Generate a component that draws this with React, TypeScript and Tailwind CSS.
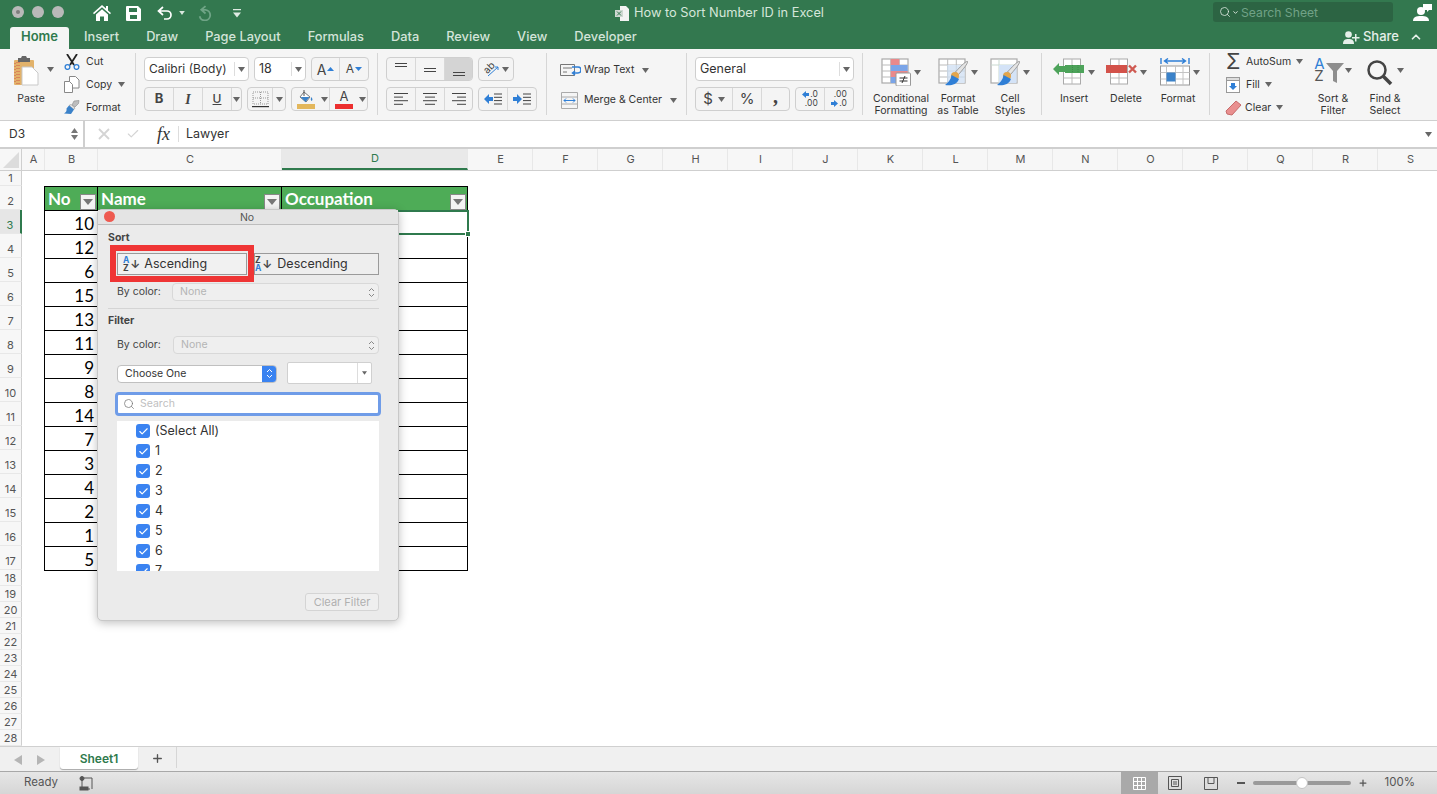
import { Check, ChevronDown, ChevronUp, Search, Plus } from "lucide-react"

const FONT = "font-['Inter','Liberation_Sans',sans-serif]"
const CELL_FONT = "font-['Lato','Noto_Sans',sans-serif]"

function Caret({ className = "" }: { className?: string }) {
  return (
    <svg width="7" height="5" viewBox="0 0 7 5" className={`shrink-0 ${className}`}>
      <path d="M0 0h7L3.5 5z" fill="#666" />
    </svg>
  )
}

function Seg({ className = "", children }: { className?: string; children: React.ReactNode }) {
  return (
    <div className={`flex h-[24px] overflow-hidden rounded-[4px] border border-[#cfcfcf] bg-[#f4f4f4] ${className}`}>
      {children}
    </div>
  )
}

function SegItem({ className = "", children }: { className?: string; children: React.ReactNode }) {
  return (
    <div className={`flex h-full items-center justify-center border-r border-[#d8d8d8] last:border-r-0 ${className}`}>
      {children}
    </div>
  )
}

function Combo({ label, className = "" }: { label: string; className?: string }) {
  return (
    <div className={`flex h-[24px] items-center rounded-[4px] border border-[#cfcfcf] bg-white text-[#333] ${className}`}>
      <span className="flex-1 pl-[4px] whitespace-nowrap">{label}</span>
      <span className="flex h-[14px] w-[14px] items-center justify-center border-l border-[#ddd]">
        <Caret />
      </span>
    </div>
  )
}

function Lines({ rows }: { rows: [number, number][] }) {
  return (
    <svg width="16" height="14" viewBox="0 0 16 14">
      {rows.map(([x, w], i) => (
        <rect key={i} x={x} y={1 + i * 3.6} width={w} height="1" fill="#444" />
      ))}
    </svg>
  )
}

function VAlign({ y }: { y: number }) {
  return (
    <svg width="14" height="16" viewBox="0 0 14 16">
      <rect x="1" y={y} width="12" height="1" fill="#444" />
      <rect x="1" y={y + 3} width="12" height="1" fill="#444" />
    </svg>
  )
}

function Indent({ flip }: { flip?: boolean }) {
  return (
    <svg width="19" height="12" viewBox="0 0 19 12">
      <path d={flip ? "M0 4h4V1l5 5-5 5V8H0z" : "M9 4H5V1L0 6l5 5V8h4z"} fill="#2f7fd6" />
      <path d="M10 1h8M10 4.3h8M10 7.6h8M10 11h8" stroke="#444" strokeWidth="1" />
    </svg>
  )
}

function SheetGrid({ children }: { children?: React.ReactNode }) {
  return (
    <svg width="30" height="28" viewBox="0 0 30 28">
      <rect x="1" y="1" width="26" height="24" fill="#fff" stroke="#aaa" strokeWidth="1.200" />
      <path d="M9.700 1v24M18.300 1v24M1 7h26M1 13h26M1 19h26" stroke="#bbb" strokeWidth="1" />
      {children}
    </svg>
  )
}

function Brush() {
  return (
    <>
      <path d="M29.500 3.500c.5 1-1 4-9 13l-3-2.500c7-8 11-11 12-10.500z" fill="#e4e4e4" stroke="#8c8c8c" strokeWidth=".8" />
      <circle cx="17" cy="18" r="4" fill="#e2a54c" />
      <path d="M13.500 17c-.5 5-4 8-6.500 10 5 1 12 0 14-6z" fill="#2f7fd6" />
    </>
  )
}

function BigTool({ icon, label, width, pad = "" }: { icon: React.ReactNode; label: React.ReactNode; width: string; pad?: string }) {
  return (
    <div className={`flex shrink-0 flex-col items-center ${width}`}>
      <div className={`flex h-[34px] shrink-0 items-start gap-[3px] ${pad}`}>
        {icon}
        <Caret className="mt-[12px]" />
      </div>
      <div className="mt-[1px] text-center text-[10.5px] leading-[12px] whitespace-nowrap text-[#333]">{label}</div>
    </div>
  )
}

function TitleBar() {
  return (
    <div className="flex h-[24px] items-center text-white">
      <div className="flex w-[90px] items-center gap-[8px] pl-[12px]">
        <span className="flex h-[12px] w-[12px] items-center justify-center rounded-full bg-[#b9b9b9]">
          <span className="h-[4px] w-[4px] rounded-full bg-[#7d7d7d]" />
        </span>
        <span className="h-[12px] w-[12px] rounded-full bg-[#b9b9b9]" />
        <span className="h-[12px] w-[12px] rounded-full bg-[#b9b9b9]" />
      </div>
      <div className="flex items-center pt-[2px]">
        <svg width="18" height="16" viewBox="0 0 18 16" className="ml-[3px]">
          <path d="M9 0 0 8l1 1.2L9 2.3l8 6.9L18 8l-3-2.6V1h-2v2.6zM3 9.6V16h4v-4.5h4V16h4V9.6L9 4.2z" fill="#fff" />
        </svg>
        <svg width="15" height="15" viewBox="0 0 15 15" className="ml-[15px]">
          <path d="M1 0h11l3 3v11a1 1 0 0 1-1 1H1a1 1 0 0 1-1-1V1a1 1 0 0 1 1-1zm2 2v4h8V2zm1 7v4h7V9z" fill="#fff" fillRule="evenodd" />
        </svg>
        <svg width="16" height="14" viewBox="0 0 16 14" className="ml-[16px]" fill="none" stroke="#fff" strokeWidth="1.7">
          <path d="M6 1 1.5 5 6 9M2 5h8a4 4 0 0 1 4 4 4 4 0 0 1-4 4H7" />
        </svg>
        <svg width="6" height="4" viewBox="0 0 7 5" className="ml-[6px]">
          <path d="M0 0h7L3.5 5z" fill="#dbe8df" />
        </svg>
        <svg width="16" height="16" viewBox="0 0 15 15" className="ml-[12px]" fill="none" stroke="#6fa486" strokeWidth="1.7">
          <path d="M8 1 4 4.5 8 8M4.5 4.5H8a5 5 0 1 1-5.5 6" />
        </svg>
        <svg width="8" height="9" viewBox="0 0 8 9" className="ml-[20px]">
          <path d="M0 0h8v1.3H0zM0 3.4h8L4 8.4z" fill="#dfeae3" />
        </svg>
      </div>
      <div className="ml-[374px] flex items-center gap-[5px] pt-[2px]">
        <svg width="14" height="15" viewBox="0 0 14 15">
          <path d="M5 0h6l3 3v12H5z" fill="#f3f3f3" />
          <rect x="0" y="4" width="8" height="7" fill="#cfd8d2" />
          <path d="m2 5.5 4 4m0-4-4 4" stroke="#33784f" strokeWidth="1" />
        </svg>
        <span className="text-[12.8px] text-[#d5e6da]">How to Sort Number ID in Excel</span>
      </div>
      <div className="ml-auto flex h-[20px] w-[180px] items-center rounded-[3px] bg-[#2c6443] pl-[6px]">
        <Search size={12} strokeWidth={1.5} className="text-[#e8f0ea]" />
        <ChevronDown size={7} strokeWidth={3} className="ml-[1px] text-[#e8f0ea]" />
        <span className="ml-[2px] pt-[2px] text-[12.2px] text-[#71a287]">Search Sheet</span>
      </div>
      <svg width="20" height="19" viewBox="0 0 20 19" className="mr-[4px] ml-[20px]">
        <circle cx="8" cy="8" r="4" fill="#fff" />
        <path d="M0 18c0-4 3-5 8-5s8 1 8 5z" fill="#fff" />
        <path d="M10 1h9v6h-3l-2 2V7h-4z" fill="#fff" />
      </svg>
    </div>
  )
}

const TABS = ["Insert", "Draw", "Page Layout", "Formulas", "Data", "Review", "View", "Developer"]
const TAB_GAPS = ["ml-[15px]", "ml-[27px]", "ml-[27px]", "ml-[27px]", "ml-[27px]", "ml-[27px]", "ml-[27px]", "ml-[27px]"]

function TabBar() {
  return (
    <div className="flex h-[25px] items-end">
      <div className="ml-[10px] flex h-[22px] w-[59px] items-center justify-center rounded-t-[3px] bg-[#f5f5f5] pb-[2px] text-[13px] font-semibold text-[#2f7a4d]">
        Home
      </div>
      <div className="flex h-[22px] items-center pb-[2px]">
        {TABS.map((t, i) => (
          <span key={t} className={`${TAB_GAPS[i]} text-[12.8px] font-medium whitespace-nowrap text-[#d3e4d9]`}>
            {t}
          </span>
        ))}
      </div>
      <div className="ml-auto flex h-[22px] items-center pr-[14px] pb-[2px] text-white">
        <svg width="17" height="13" viewBox="0 0 17 13">
          <circle cx="5.5" cy="3.5" r="3.3" fill="#e5efe9" />
          <path d="M0 13c0-4 2-5 5.5-5s5.500 1 5.500 5z" fill="#e5efe9" />
          <path d="M12 3v3H9v1.500h3v3h1.500v-3h3V6h-3V3z" fill="#e5efe9" />
        </svg>
        <span className="ml-[3px] text-[13px] font-medium text-[#e5efe9]">Share</span>
        <ChevronUp size={14} strokeWidth={3} className="ml-[10px] text-[#e5efe9]" />
      </div>
    </div>
  )
}

function ClipboardGroup() {
  return (
    <div className="flex h-[62px] w-[136px] shrink-0 border-r border-[#d6d6d6]">
      <div className="ml-[13px] flex w-[36px] shrink-0 flex-col items-center">
        <svg width="26" height="31" viewBox="0 0 26 31" className="mt-[3px] mr-[10px] shrink-0">
          <rect x="1" y="4" width="20" height="25" rx="1" fill="#e2b26a" />
          <path d="M2 7v21M4 6v23M6 6v23" stroke="#d05b4a" strokeWidth="1" strokeDasharray="1 2" />
          <path d="M5 4V2h3l1-2h4l1 2h3v4H5z" fill="#666" />
          <path d="M9 11h10l6 6v12H9z" fill="#fff" stroke="#c9c9c9" />
        </svg>
        <span className="mt-[6px] text-[10.5px] leading-[12px] text-[#333]">Paste</span>
      </div>
      <Caret className="mt-[14px] -ml-[2px]" />
      <div className="-mt-[3px] ml-[10px] flex flex-col">
        <div className="flex h-[23px] shrink-0 items-center">
          <svg width="16" height="16" viewBox="0 0 16 16" fill="none" className="mr-[6px]">
            <path d="m3 0 7 11M13 0 6 11" stroke="#222" strokeWidth="1.8" />
            <circle cx="3.500" cy="13" r="2.400" stroke="#2f7fd6" strokeWidth="1.300" />
            <circle cx="12.500" cy="13" r="2.400" stroke="#2f7fd6" strokeWidth="1.300" />
          </svg>
          <span className="text-[10.5px] text-[#333]">Cut</span>
        </div>
        <div className="flex h-[23px] shrink-0 items-center">
          <svg width="16" height="17" viewBox="0 0 16 17" fill="#fff" stroke="#888" className="mr-[6px]">
            <path d="M5.500.5h6l3.500 3.500v8h-9.500z" />
            <path d="M.5 5.500h5l3 3v8h-8z" />
          </svg>
          <span className="text-[10.500px] text-[#333]">Copy</span>
          <Caret className="ml-[6px]" />
        </div>
        <div className="flex h-[23px] shrink-0 items-center">
          <svg width="16" height="15" viewBox="0 0 16 15" className="mr-[6px]">
            <path d="m10 1 5-.5-.5 3L11 7 8 5z" fill="#bdbdbd" stroke="#888" strokeWidth=".6" />
            <path d="m7 4.500 4 3.500-1 1.500-5-4z" fill="#e8e8e8" stroke="#888" strokeWidth=".6" />
            <path d="m5 5.500 5 4-3 4.500-7-.5c2-1 3-3 2.500-5z" fill="#3b82c9" />
          </svg>
          <span className="text-[10.500px] text-[#333]">Format</span>
        </div>
      </div>
    </div>
  )
}

function FontGroup() {
  return (
    <div className="flex h-[62px] w-[242px] shrink-0 flex-col gap-[6px] border-r border-[#d6d6d6] pt-[4px] pl-[8px]">
      <div className="flex gap-[5px]">
        <Combo label="Calibri (Body)" className="w-[105px] text-[12px]" />
        <Combo label="18" className="w-[52px] text-[12.5px]" />
        <Seg className="w-[58px]">
          <SegItem className="w-[29px] gap-[1px]">
            <span className="text-[14px] text-[#444]">A</span>
            <svg width="7" height="4" viewBox="0 0 7 4"><path d="M0 4h7L3.500 0z" fill="#2f7fd6" /></svg>
          </SegItem>
          <SegItem className="w-[29px] gap-[1px]">
            <span className="text-[12px] text-[#444]">A</span>
            <svg width="7" height="4" viewBox="0 0 7 4"><path d="M0 0h7L3.500 4z" fill="#2f7fd6" /></svg>
          </SegItem>
        </Seg>
      </div>
      <div className="flex gap-[5px]">
        <Seg className="w-[98px]">
          <SegItem className="w-[29px] text-[13px] font-bold text-[#444]">B</SegItem>
          <SegItem className="w-[29px] font-['Liberation_Serif',serif] text-[14px] font-bold text-[#444] italic">I</SegItem>
          <SegItem className="w-[29px] text-[12px] font-medium text-[#444] underline">U</SegItem>
          <SegItem className="flex-1"><Caret /></SegItem>
        </Seg>
        <Seg className="w-[39px]">
          <SegItem className="w-[25px]">
            <svg width="17" height="17" viewBox="0 0 17 17">
              <path d="M1 1h15v12H1zM8.500 1v12M1 7h15" fill="none" stroke="#999" strokeDasharray="1 1" />
              <rect x="0" y="15" width="17" height="1.200" fill="#333" />
            </svg>
          </SegItem>
          <SegItem className="flex-1"><Caret /></SegItem>
        </Seg>
        <Seg className="w-[77px]">
          <div className="flex w-[28px] flex-col items-center justify-center">
            <svg width="14" height="13" viewBox="0 0 14 13">
              <path d="m5 2 6 5-4 5-6-5z" fill="#fff" stroke="#777" strokeWidth="1" />
              <path d="M1.500 7h9l-4 5z" fill="#3b82c9" />
              <path d="M5 0v6" stroke="#555" />
              <path d="M12.500 7c1 2 1.500 3 0 4-1-1-1-2 0-4z" fill="#3b82c9" />
            </svg>
            <span className="mt-[1px] h-[5px] w-[18px] bg-[#e3b75c]" />
          </div>
          <SegItem className="w-[10px]"><Caret /></SegItem>
          <div className="flex w-[28px] flex-col items-center justify-center">
            <span className="text-[13px] leading-[13px] text-[#444]">A</span>
            <span className="mt-[1px] h-[5px] w-[18px] bg-[#ec2f2f]" />
          </div>
          <div className="flex flex-1 items-center justify-center"><Caret /></div>
        </Seg>
      </div>
    </div>
  )
}

function AlignGroup() {
  return (
    <div className="flex h-[62px] w-[169px] shrink-0 flex-col gap-[6px] border-r border-[#d6d6d6] pt-[4px] pl-[8px]">
      <div className="flex gap-[5px]">
        <Seg className="w-[87px]">
          <SegItem className="w-[29px]"><VAlign y={2} /></SegItem>
          <SegItem className="w-[29px]"><VAlign y={7} /></SegItem>
          <SegItem className="flex-1 bg-[#d4d4d4]"><VAlign y={11} /></SegItem>
        </Seg>
        <Seg className="w-[36px]">
          <div className="flex flex-1 items-center justify-center gap-[3px]">
            <span className="relative flex h-[16px] w-[16px] items-center justify-center">
              <span className="-translate-x-[2px] -translate-y-[2px] -rotate-45 text-[10px] text-[#444]">ab</span>
              <svg width="16" height="16" viewBox="0 0 16 16" className="absolute top-0 left-0">
                <path d="m5 15 10-9M15 6h-3M15 6v3" stroke="#2f7fd6" fill="none" />
              </svg>
            </span>
            <Caret />
          </div>
        </Seg>
      </div>
      <div className="flex gap-[5px]">
        <Seg className="w-[87px]">
          <SegItem className="w-[29px]"><Lines rows={[[1, 14], [1, 9], [1, 14], [1, 9]]} /></SegItem>
          <SegItem className="w-[29px]"><Lines rows={[[1, 14], [3, 10], [1, 14], [3, 10]]} /></SegItem>
          <SegItem className="flex-1"><Lines rows={[[1, 14], [6, 9], [1, 14], [6, 9]]} /></SegItem>
        </Seg>
        <Seg className="w-[59px]">
          <SegItem className="w-[29px]"><Indent /></SegItem>
          <SegItem className="flex-1"><Indent flip /></SegItem>
        </Seg>
      </div>
    </div>
  )
}

function WrapGroup() {
  return (
    <div className="flex h-[62px] w-[140px] shrink-0 flex-col border-r border-[#d6d6d6] pt-[5px] pl-[13px] text-[10.500px] text-[#333]">
      <div className="flex h-[24px] items-center">
        <svg width="21" height="14" viewBox="0 0 21 14" fill="none" className="mr-[3px]">
          <path d="M.5 1.500h14v11H.5zM3 5h9M3 9h4" stroke="#777" />
          <path d="M12 4h6a2.500 2.500 0 0 1 0 6h-5M15 8l-2.500 2 2.500 2" stroke="#2f7fd6" strokeWidth="1.500" />
        </svg>
        <span className="whitespace-nowrap">Wrap Text</span>
        <Caret className="ml-[8px]" />
      </div>
      <div className="mt-[6px] flex h-[24px] items-center">
        <svg width="18" height="17" viewBox="0 0 18 17" fill="none" className="mr-[5px] ml-[1px]">
          <path d="M.5.500h16v16H.5zM.5 5h16M.5 12h16" stroke="#aaa" />
          <path d="M3 8.500h11M5 6.500l-2 2 2 2M12 6.500l2 2-2 2" stroke="#2f7fd6" />
        </svg>
        <span className="whitespace-nowrap">Merge &amp; Center</span>
        <Caret className="ml-[8px]" />
      </div>
    </div>
  )
}

function NumberGroup() {
  return (
    <div className="flex h-[62px] w-[176px] shrink-0 flex-col gap-[6px] border-r border-[#d6d6d6] pt-[4px] pl-[8px]">
      <Combo label="General" className="w-[159px] text-[12.5px]" />
      <div className="flex gap-[5px]">
        <Seg className="w-[95px]">
          <SegItem className="w-[37px] gap-[5px]">
            <span className="text-[15px] text-[#444]">$</span>
            <Caret />
          </SegItem>
          <SegItem className="w-[29px] text-[15px] text-[#444]">%</SegItem>
          <SegItem className="flex-1 pb-[6px] font-['Liberation_Serif',serif] text-[20px] leading-[16px] font-bold text-[#444]">,</SegItem>
        </Seg>
        <Seg className="w-[59px]">
          <SegItem className="w-[29px]">
            <span className="flex flex-col items-end text-[8.500px] leading-[9px] text-[#444]">
              <span className="flex items-center gap-[1px]">
                <svg width="7" height="7" viewBox="0 0 7 7"><path d="M0 3.500 4 0v2h3v3H4v2z" fill="#2f7fd6" /></svg>
                .0
              </span>
              <span>.00</span>
            </span>
          </SegItem>
          <SegItem className="flex-1">
            <span className="flex flex-col items-end text-[8.500px] leading-[9px] text-[#444]">
              <span>.00</span>
              <span className="flex items-center gap-[1px]">
                <svg width="7" height="7" viewBox="0 0 7 7"><path d="M7 3.500 3 0v2H0v3h3v2z" fill="#2f7fd6" /></svg>
                .0
              </span>
            </span>
          </SegItem>
        </Seg>
      </div>
    </div>
  )
}

function StylesGroup() {
  return (
    <div className="flex h-[62px] w-[179px] shrink-0 border-r border-[#d6d6d6] pt-[5px] pl-[8px]">
      <BigTool
        width="w-[60px]"
        label={<>Conditional<br />Formatting</>}
        icon={
          <SheetGrid>
            <rect x="9.700" y="1" width="8.600" height="6" fill="#e9898b" />
            <rect x="9.700" y="7" width="17" height="6" fill="#7ba5e8" />
            <rect x="9.700" y="13" width="17" height="6" fill="#e9898b" />
            <rect x="9.700" y="19" width="8.600" height="6" fill="#7ba5e8" />
            <rect x="15" y="15" width="14.500" height="13" rx="1" fill="#fff" stroke="#999" />
            <path d="M18.500 20h8M18.500 23h8M24 18l-3 7" stroke="#333" />
          </SheetGrid>
        }
      />
      <BigTool
        width="w-[54px]"
        label={<>Format<br />as Table</>}
        icon={
          <SheetGrid>
            <rect x="9.700" y="7" width="17" height="18" fill="#dbe7f6" />
            <path d="M9.700 7v18M18.300 7v18M9.700 13h17M9.700 19h17" stroke="#c8d6e4" />
            <Brush />
          </SheetGrid>
        }
      />
      <BigTool
        width="w-[50px]"
        label={<>Cell<br />Styles</>}
        icon={
          <svg width="30" height="28" viewBox="0 0 30 28">
            <rect x="1" y="1" width="26" height="24" fill="#fff" stroke="#aaa" strokeWidth="1.200" />
            <path d="M1 7h26M9 1v24" stroke="#c9d8d0" />
            <rect x="9" y="7" width="17.500" height="18" fill="#d4e3f7" />
            <Brush />
          </svg>
        }
      />
    </div>
  )
}

function CellsGroup() {
  return (
    <div className="flex h-[62px] w-[168px] shrink-0 border-r border-[#d6d6d6] pt-[5px] pl-[6px]">
      <BigTool
        width="w-[52px]"
        label="Insert"
        icon={
          <svg width="32" height="28" viewBox="0 0 32 28">
            <rect x="10.500" y="1" width="17" height="25" fill="#fff" stroke="#aaa" />
            <path d="M19 1v25M10.500 20h17" stroke="#bbb" />
            <rect x="12" y="7" width="19" height="8" fill="#4da35a" />
            <path d="M19.500 7v8M25 7v8" stroke="#3f8c4a" strokeDasharray="1 1" />
            <path d="M0 11 6 5v3h6v6H6v3z" fill="#4da35a" />
          </svg>
        }
      />
      <BigTool
        width="w-[52px]"
        label="Delete"
        icon={
          <svg width="31" height="28" viewBox="0 0 31 28">
            <rect x="4.500" y="1" width="17" height="25" fill="#fff" stroke="#aaa" />
            <path d="M13 1v25M4.500 20h17" stroke="#bbb" />
            <rect x="0" y="7" width="21" height="8" fill="#d3524a" />
            <path d="m23 7.500 7 7m0-7-7 7" stroke="#cf5a52" strokeWidth="2.400" />
          </svg>
        }
      />
      <BigTool
        width="w-[52px]"
        pad="pl-[3px]"
        label="Format"
        icon={
          <svg width="30" height="28" viewBox="0 0 30 28">
            <path d="M1 0v6M29 0v6M5 3h20M8 .5 4.500 3 8 5.500M22 .5 25.500 3 22 5.500" stroke="#2f7fd6" fill="none" strokeWidth="1.400" />
            <rect x=".5" y="8" width="29" height="19" fill="#fff" stroke="#999" />
            <path d="M6.500 8v19M15.500 8v19M23 8v19M.5 14.500h29M.5 21h29" stroke="#c4c4c4" />
            <rect x="6.500" y="14.500" width="9" height="9" fill="#3b82c9" />
          </svg>
        }
      />
    </div>
  )
}

function EditGroup() {
  return (
    <div className="flex h-[62px] flex-1 pl-[16px] text-[10.500px] text-[#333]">
      <div className="-mt-[3px] flex w-[81px] shrink-0 flex-col">
        <div className="flex h-[23px] shrink-0 items-center">
          <span className="w-[20px] text-[21px] leading-[19px] text-[#444]">Σ</span>
          <span>AutoSum</span>
          <Caret className="ml-[5px]" />
        </div>
        <div className="flex h-[23px] shrink-0 items-center">
          <svg width="14" height="16" viewBox="0 0 14 16" className="mr-[6px]">
            <rect x=".5" y=".5" width="13" height="15" fill="#fff" stroke="#999" />
            <rect x=".5" y=".5" width="13" height="3" fill="#ddd" stroke="#999" />
            <path d="M5 6h4v3h2l-4 4-4-4h2z" fill="#2f7fd6" />
          </svg>
          <span>Fill</span>
          <Caret className="ml-[5px]" />
        </div>
        <div className="flex h-[23px] shrink-0 items-center">
          <svg width="17" height="16" viewBox="0 0 17 16" className="mr-[3px] -ml-[1px]">
            <path d="m11 1 5 4-9 10-5-1-1-3z" fill="#e98f8f" stroke="#c76b6b" />
          </svg>
          <span>Clear</span>
          <Caret className="ml-[5px]" />
        </div>
      </div>
      <div className="flex w-[52px] shrink-0 flex-col items-center pt-[5px]">
        <div className="flex h-[34px] shrink-0 items-start">
          <span className="flex flex-col text-[15px] leading-[12px]">
            <span className="text-[#2f7fd6]">A</span>
            <span className="text-[#555]">Z</span>
          </span>
          <svg width="18" height="22" viewBox="0 0 18 22" className="mt-[4px] ml-[1px]">
            <path d="M0 1h18l-7 8v12l-4-2V9z" fill="#8e8e8e" />
          </svg>
          <Caret className="mt-[10px] ml-[1px]" />
        </div>
        <div className="mt-[1px] text-center leading-[12px]">Sort &amp;<br />Filter</div>
      </div>
      <div className="flex w-[52px] shrink-0 flex-col items-center pt-[5px]">
        <div className="flex h-[34px] shrink-0 items-start">
          <svg width="27" height="27" viewBox="0 0 27 27" fill="none" className="mt-[1px]">
            <circle cx="11" cy="11" r="8.500" stroke="#444" strokeWidth="2.500" />
            <path d="m17 17 8 8" stroke="#444" strokeWidth="3.500" />
          </svg>
          <Caret className="mt-[10px] ml-[4px]" />
        </div>
        <div className="mt-[1px] text-center leading-[12px]">Find &amp;<br />Select</div>
      </div>
    </div>
  )
}

function FormulaBar() {
  return (
    <div className="flex h-[29px] items-stretch border-t border-b-[2px] border-[#cfcfcf] bg-white text-[12px] text-[#333]">
      <div className="flex w-[85px] items-center border-r-[2px] border-[#cfcfcf] pl-[9px]">
        <span className="flex-1">D3</span>
        <span className="mr-[5px] flex flex-col gap-[2px]">
          <svg width="7" height="5" viewBox="0 0 7 5"><path d="M0 5h7L3.500 0z" fill="#777" /></svg>
          <svg width="7" height="5" viewBox="0 0 7 5"><path d="M0 0h7L3.500 5z" fill="#777" /></svg>
        </span>
      </div>
      <div className="flex items-center">
        <svg width="12" height="12" viewBox="0 0 12 12" className="ml-[13px]">
          <path d="m1 1 10 10m0-10L1 11" stroke="#d4d4d4" strokeWidth="1.800" />
        </svg>
        <Check size={14} strokeWidth={2} className="ml-[16px] text-[#d4d4d4]" />
        <span className="ml-[17px] font-['Liberation_Serif',serif] text-[18px] leading-[18px] text-[#333] italic">fx</span>
        <span className="ml-[8px] h-[16px] border-l border-[#ddd]" />
        <span className="ml-[7px] text-[12.5px]">Lawyer</span>
      </div>
      <div className="ml-auto flex items-center pr-[5px]">
        <Caret />
      </div>
    </div>
  )
}

const COLUMNS: [string, string][] = [
  ["A", "w-[23px]"],
  ["B", "w-[53px]"],
  ["C", "w-[184px]"],
  ["D", "w-[186px]"],
  ...["E", "F", "G", "H", "I", "J", "K", "L", "M", "N", "O", "P", "Q", "R", "S"].map((c): [string, string] => [c, "w-[65px]"]),
]

const NUMBERS = [10, 12, 6, 15, 13, 11, 9, 8, 14, 7, 3, 4, 2, 1, 5]

function HeaderFilter() {
  return (
    <span className="absolute right-[1px] bottom-[1px] flex h-[16px] w-[16px] items-center justify-center border border-[#888] bg-[#f4f4f4]">
      <svg width="10" height="6" viewBox="0 0 10 6"><path d="M0 0h10L5 6z" fill="#777" /></svg>
    </span>
  )
}

function rowClass(n: number) {
  if (n === 1) return "h-[15px] border-r border-r-[#cfcfcf]"
  if (n === 3) return "h-[24px] border-r-[2px] border-r-[#2f7a4d] bg-[#e6e6e6] pt-[7px] text-[#2f7a4d]"
  if (n <= 17) return "h-[24px] border-r border-r-[#cfcfcf] pt-[7px]"
  return "h-[16px] border-r border-r-[#cfcfcf] pt-[2px]"
}

function Sheet() {
  const rowNums = Array.from({ length: 28 }, (_, i) => i + 1)
  return (
    <div className="relative flex h-[597px] overflow-hidden bg-white">
      <div className="flex w-[22px] shrink-0 flex-col bg-[#f7f7f7] text-[11px] text-[#555]">
        <div className="relative h-[22px] shrink-0 border-r border-b border-[#cfcfcf]">
          <svg width="16" height="16" viewBox="0 0 16 16" className="absolute right-[2px] bottom-[2px]">
            <path d="M16 0v16H0z" fill="#dcdcdc" />
          </svg>
        </div>
        {rowNums.map((n) => (
          <div key={n} className={`flex shrink-0 items-center justify-center border-b border-b-[#e8e8e8] ${rowClass(n)}`}>
            {n}
          </div>
        ))}
      </div>
      <div className="min-w-0 flex-1">
        <div className="flex h-[22px] border-b border-[#cfcfcf] bg-[#f7f7f7] text-[11px] text-[#555]">
          {COLUMNS.map(([c, w]) => (
            <div
              key={c}
              className={`flex shrink-0 items-center justify-center border-r border-[#e8e8e8] pl-[1px] ${w} ${
                c === "D" ? "border-b-[2px] border-b-[#2f7a4d] bg-[#e9e9e9] text-[#2f7a4d]" : ""
              }`}
            >
              {c}
            </div>
          ))}
        </div>
        <div className={`pt-[15px] pl-[22px] ${CELL_FONT}`}>
          <div className="w-[424px] border-t border-l border-black">
            <div className="grid h-[24px] grid-cols-[53px_184px_186px] border-b border-black bg-[#4eac57] text-[17px] leading-[24px] font-bold text-white">
              <div className="relative border-r border-black pl-[3px]">No<HeaderFilter /></div>
              <div className="relative border-r border-black pl-[3px]">Name<HeaderFilter /></div>
              <div className="relative border-r border-black pl-[3px]">Occupation<HeaderFilter /></div>
            </div>
            {NUMBERS.map((n) => (
              <div key={n} className="grid h-[24px] grid-cols-[53px_370px] border-r border-b border-black text-[17px] leading-[26px] text-black">
                <div className="pr-[4px] text-right">{n}</div>
                <div />
              </div>
            ))}
          </div>
        </div>
      </div>
      {/* selected cell D3 */}
      <div className="absolute top-[61px] left-[282px] h-[25px] w-[187px] border-2 border-[#2f7a4d]">
        <span className="absolute -right-[4px] -bottom-[4px] h-[6px] w-[6px] border border-white bg-[#2f7a4d]" />
      </div>
      <FilterPopup />
    </div>
  )
}

function Disabled({ label, className = "" }: { label: string; className?: string }) {
  return (
    <div className={`flex h-[18px] items-center rounded-[4px] border border-[#d8d8d8] bg-[#efefef] pr-[3px] pl-[7px] text-[10.500px] text-[#b4b4b4] ${className}`}>
      <span className="flex-1">{label}</span>
      <svg width="7" height="11" viewBox="0 0 7 11" fill="none" stroke="#888">
        <path d="m1 4 2.500-2.500L6 4M1 7l2.500 2.500L6 7" />
      </svg>
    </div>
  )
}

function CheckRow({ label }: { label: string }) {
  return (
    <div className="flex h-[20px] shrink-0 items-center pl-[19px] text-[12.5px] text-[#333]">
      <span className="mr-[5px] flex h-[14px] w-[14px] items-center justify-center rounded-[3px] bg-[#3a83f1]">
        <Check size={11} strokeWidth={2.500} className="text-white" />
      </span>
      {label}
    </div>
  )
}

function FilterPopup() {
  return (
    <div className={`absolute top-[60px] left-[97px] h-[412px] w-[302px] rounded-[5px] border border-[#c8c8c8] bg-[#ebebeb] shadow-[0_2px_10px_rgba(0,0,0,0.25)] ${FONT}`}>
      <div className="relative flex h-[15px] items-center justify-center border-b border-[#bdbdbd] bg-[#e4e4e4] pt-[1px] pr-[2px] text-[10.500px] text-[#555]">
        <span className="absolute top-[1px] left-[6px] h-[11px] w-[11px] rounded-full bg-[#ee5a50]" />
        No
      </div>
      <div className="relative px-[19px]">
        <div className="-ml-[9px] pt-[6px] text-[10.500px] leading-[13px] font-bold text-[#444]">Sort</div>
        <div className="mt-[9px] flex text-[12.500px] text-[#333]">
          <div className="flex h-[22px] w-[130px] items-center border border-[#9a9a9a] bg-[#f1f1f1] pl-[5px]">
            <span className="flex flex-col text-[8.500px] leading-[8px] font-bold">
              <span className="text-[#2f7fd6]">A</span>
              <span className="text-[#444]">Z</span>
            </span>
            <span className="ml-[1px] text-[11px] leading-none font-bold text-[#444]">↓</span>
            <span className="ml-[4px]">Ascending</span>
          </div>
          <div className="ml-[7px] flex h-[22px] w-[125px] items-center border border-[#9a9a9a] bg-[#eeeeee]">
            <span className="flex flex-col text-[8.500px] leading-[8px] font-bold">
              <span className="text-[#444]">Z</span>
              <span className="text-[#2f7fd6]">A</span>
            </span>
            <span className="ml-[1px] text-[11px] leading-none font-bold text-[#444]">↓</span>
            <span className="ml-[5px]">Descending</span>
          </div>
        </div>
        <div className="mt-[8px] flex items-center text-[10.500px] text-[#444]">
          <span className="w-[55px]">By color:</span>
          <Disabled label="None" className="w-[207px]" />
        </div>
        <div className="mt-[7px] -ml-[9px] border-t border-[#d4d4d4]" />
        <div className="-ml-[9px] pt-[5px] text-[10.500px] leading-[13px] font-bold text-[#444]">Filter</div>
        <div className="mt-[9px] flex items-center text-[10.500px] text-[#444]">
          <span className="w-[56px]">By color:</span>
          <Disabled label="None" className="w-[206px]" />
        </div>
        <div className="mt-[8px] flex items-center">
          <div className="mt-[1px] flex h-[18px] w-[160px] items-center overflow-hidden rounded-[4px] border border-[#c0c0c0] bg-white text-[10.500px] text-[#333]">
            <span className="flex-1 pl-[7px]">Choose One</span>
            <span className="flex h-full w-[14px] items-center justify-center bg-[#3a83f1]">
              <svg width="7" height="11" viewBox="0 0 7 11" fill="none" stroke="#fff">
                <path d="m1 4 2.500-2.500L6 4M1 7l2.500 2.500L6 7" />
              </svg>
            </span>
          </div>
          <div className="ml-[10px] flex h-[22px] w-[85px] items-center rounded-[2px] border border-[#d0d0d0] bg-white">
            <span className="flex-1" />
            <span className="flex h-full w-[14px] items-center justify-center border-l border-[#ddd]">
              <svg width="5" height="4" viewBox="0 0 7 5"><path d="M0 0h7L3.500 5z" fill="#666" /></svg>
            </span>
          </div>
        </div>
        <div className="-mx-[2px] mt-[8px] flex h-[24px] items-center rounded-[4px] border-[3px] border-[#6f9ce8] bg-white pl-[5px]">
          <Search size={12} strokeWidth={1.500} className="text-[#777]" />
          <span className="ml-[5px] text-[10.500px] text-[#c0c0c0]">Search</span>
        </div>
        <div className="mt-[5px] flex h-[150px] flex-col overflow-hidden bg-white">
          {["(Select All)", "1", "2", "3", "4", "5", "6", "7"].map((l) => (
            <CheckRow key={l} label={l} />
          ))}
        </div>
        <div className="mt-[22px] flex justify-end">
          <div className="flex h-[18px] w-[74px] items-center justify-center rounded-[3px] border border-[#d4d4d4] bg-[#efefef] text-[11px] text-[#b0b0b0]">
            Clear Filter
          </div>
        </div>
        {/* red highlight round the Ascending button */}
        <div className="absolute top-[20px] left-[12px] h-[37px] w-[144px] border-[6px] border-[#ef3535]" />
      </div>
    </div>
  )
}

function SheetTabs() {
  return (
    <div className="flex h-[25px] items-start border-t border-[#d0d0d0] bg-[#f0f0f0]">
      <svg width="8" height="10" viewBox="0 0 8 10" className="mt-[8px] ml-[14px]"><path d="M8 0v10L0 5z" fill="#b5b5b5" /></svg>
      <svg width="8" height="10" viewBox="0 0 8 10" className="mt-[8px] ml-[15px]"><path d="M0 0v10l8-5z" fill="#b5b5b5" /></svg>
      <div className="ml-[15px] flex h-[22px] w-[78px] items-center justify-center rounded-b-[3px] bg-white pt-[1px] text-[12px] font-semibold text-[#2f7a4d] shadow-[0_1px_1px_rgba(0,0,0,0.3)]">
        Sheet1
      </div>
      <Plus size={13} strokeWidth={2.500} className="mt-[5px] ml-[13px] text-[#555]" />
      <div className="ml-[12px] h-[21px] border-l border-[#d6d6d6]" />
    </div>
  )
}

function StatusBar() {
  return (
    <div className="flex h-[23px] items-center border-t border-[#a8a8a8] bg-gradient-to-b from-[#e6e6e6] to-[#d6d6d6] text-[11.500px] text-[#555]">
      <span className="ml-[24px]">Ready</span>
      <svg width="15" height="15" viewBox="0 0 15 15" fill="none" stroke="#555" className="ml-[21px]">
        <path d="M5 2h8v11M2 13h9M3 4v9" />
        <circle cx="3" cy="2.500" r="2" fill="#555" />
        <rect x="1" y="11" width="8" height="3" fill="#555" />
      </svg>
      <div className="ml-auto flex h-full w-[37px] items-center justify-center bg-[#a9a9a9]">
        <svg width="13" height="13" viewBox="0 0 13 13" fill="none" stroke="#fff">
          <path d="M.5.500h12v12H.5zM4.500.500v12M8.500.500v12M.5 4.500h12M.5 8.500h12" />
        </svg>
      </div>
      <svg width="14" height="14" viewBox="0 0 14 14" fill="none" stroke="#555" className="ml-[10px]">
        <path d="M.5.500h13v13H.5zM3.500 3.500h7v7h-7zM5 6h4M5 8h4" />
      </svg>
      <svg width="14" height="13" viewBox="0 0 14 13" fill="none" stroke="#555" className="ml-[22px]">
        <path d="M.5.500h13v12H.5zM4 .5v6h6v-6" />
      </svg>
      <span className="ml-[19px] h-[2px] w-[8px] bg-[#555]" />
      <div className="relative ml-[8px] flex h-[4px] w-[98px] items-center rounded-full bg-[#9a9a9a]">
        <span className="absolute left-[43px] h-[12px] w-[12px] rounded-full border border-[#c4c4c4] bg-white" />
      </div>
      <Plus size={10} strokeWidth={3} className="ml-[7px] text-[#555]" />
      <span className="mr-[22px] ml-[17px]">100%</span>
    </div>
  )
}

export default function App() {
  return (
    <div className={`flex h-[794px] w-[1437px] flex-col overflow-hidden ${FONT}`}>
      <div className="bg-[#33784f]">
        <TitleBar />
        <TabBar />
      </div>
      <div className="flex h-[71px] bg-[#f5f5f5] pt-[4px]">
        <ClipboardGroup />
        <FontGroup />
        <AlignGroup />
        <WrapGroup />
        <NumberGroup />
        <StylesGroup />
        <CellsGroup />
        <EditGroup />
      </div>
      <FormulaBar />
      <Sheet />
      <SheetTabs />
      <StatusBar />
    </div>
  )
}
